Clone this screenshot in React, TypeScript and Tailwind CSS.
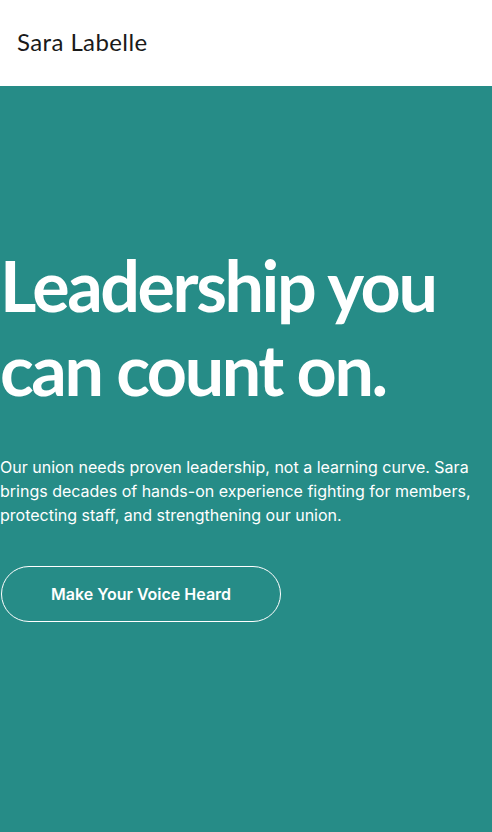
export default function App() {
  return (
    <div className="flex min-h-[832px] flex-col bg-[#268c87]" style={{ fontFamily: "Inter, 'Liberation Sans', sans-serif" }}>
      <header className="flex h-[86px] items-center bg-white pb-[3px] pl-[17px]">
        <span className="text-[24px] tracking-[0.4px] text-[#1a1a1a]" style={{ fontFamily: "Lato, 'Noto Sans', sans-serif" }}>
          Sara Labelle
        </span>
      </header>
      <section className="flex flex-1 flex-col pt-[157px] text-white">
        <h1
          className="text-[70px] font-bold leading-[84px] tracking-[-2.4px]"
          style={{ fontFamily: "Lato, 'Noto Sans', sans-serif" }}
        >
          Leadership you
          <br />
          can count on.
        </h1>
        <p className="mt-[44px] text-base leading-6">
          Our union needs proven leadership, not a learning curve. Sara brings decades of hands-on experience fighting
          for members, protecting staff, and strengthening our union.
        </p>
        <button className="ml-px mt-[39px] flex h-[56px] w-[280px] items-center justify-center rounded-full border border-white text-base font-semibold">
          Make Your Voice Heard
        </button>
      </section>
    </div>
  )
}
